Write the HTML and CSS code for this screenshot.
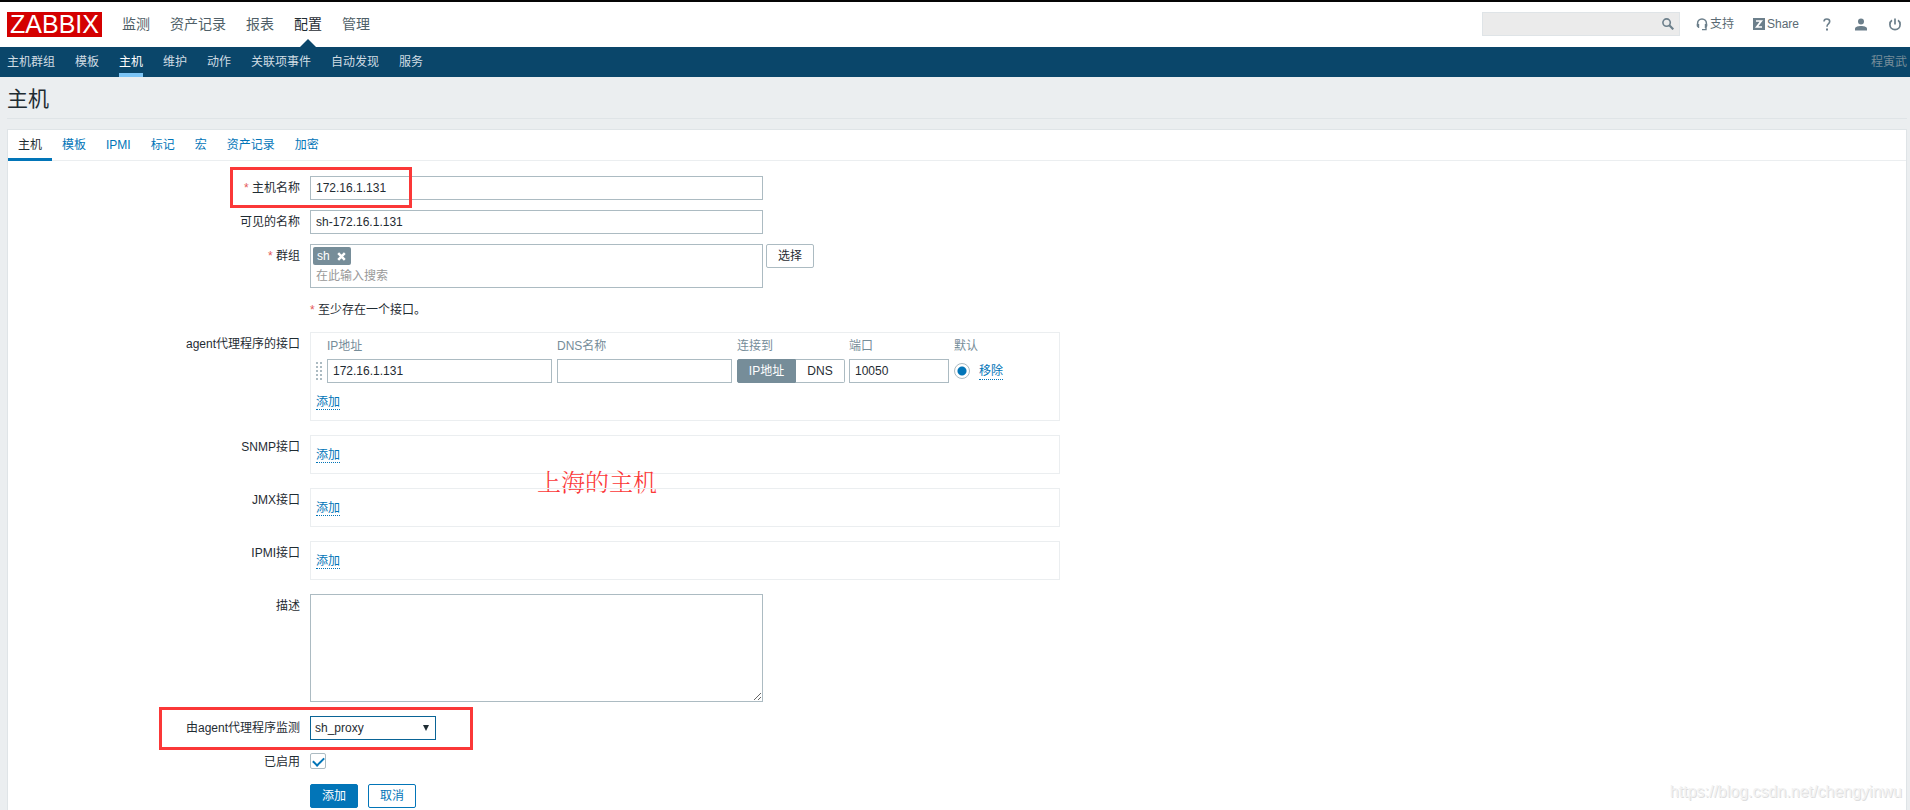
FILE: index.html
```html
<!DOCTYPE html>
<html lang="zh-CN">
<head>
<meta charset="utf-8">
<title>主机</title>
<link rel="stylesheet" href="styles.css">
</head>
<body>
<header class="header">
  <a class="logo" href="#">ZABBIX</a>
  <nav class="main-nav">
    <a href="#">监测</a>
    <a href="#">资产记录</a>
    <a href="#">报表</a>
    <a href="#" class="selected">配置</a>
    <a href="#">管理</a>
  </nav>
  <div class="search">
    <input type="text" aria-label="搜索">
    <button type="button" aria-label="搜索">
      <svg width="12" height="12" viewBox="0 0 12 12"><circle cx="4.600" cy="4.600" r="3.700" fill="none" stroke="currentColor" stroke-width="1.600"/><path d="M7.300 7.300l4 4" stroke="currentColor" stroke-width="2.200"/></svg>
    </button>
  </div>
  <div class="tools">
    <a href="#" class="tool support">
      <svg width="12" height="13" viewBox="0 0 12 13"><path d="M1.600 8V5.300C1.600 3 3.300 1 6 1s4.400 2 4.400 4.300V8" fill="none" stroke="currentColor" stroke-width="1.500"/><path d="M.8 6h2.400v4H2.400L.8 8.600zM8.800 6h2.400v2.600L9.600 10h-.8z" fill="currentColor"/><path d="M10 9v2.600H6" fill="none" stroke="currentColor" stroke-width="1.400"/></svg>
      <span>支持</span>
    </a>
    <a href="#" class="tool share">
      <svg width="12" height="12" viewBox="0 0 12 12"><path d="M0 0h12v12H0z" fill="currentColor"/><path d="M3 3h5.300L3.700 9H9" fill="none" stroke="#fff" stroke-width="1.700"/></svg>
      <span>Share</span>
    </a>
    <a href="#" class="tool help" aria-label="帮助">
      <svg width="8" height="13" viewBox="0 0 8 13"><path d="M1 3.600C1 1.900 2.200 1 3.800 1s2.900.9 2.900 2.500c0 1.200-.8 1.800-1.600 2.600C4.200 6.800 4 7.300 4 8.800" fill="none" stroke="currentColor" stroke-width="1.600"/><path d="M3 10.500h2v2H3z" fill="currentColor"/></svg>
    </a>
    <a href="#" class="tool user" aria-label="用户">
      <svg width="12" height="13" viewBox="0 0 12 13"><circle cx="6" cy="3.400" r="3" fill="currentColor"/><path d="M0 12.500v-1.700C0 8.800 3 8 6 8s6 .8 6 2.800v1.700z" fill="currentColor"/></svg>
    </a>
    <a href="#" class="tool power" aria-label="退出">
      <svg width="12" height="13" viewBox="0 0 12 13"><path d="M3 2.200C1.600 3.100.9 4.600.9 6.400c0 3 2.200 5.200 5.100 5.200s5.100-2.200 5.100-5.200c0-1.800-.7-3.300-2.100-4.200M6 .5v6" fill="none" stroke="currentColor" stroke-width="1.700"/></svg>
    </a>
  </div>
</header>

<nav class="sub-nav">
  <a href="#">主机群组</a>
  <a href="#">模板</a>
  <a href="#" class="selected">主机</a>
  <a href="#">维护</a>
  <a href="#">动作</a>
  <a href="#">关联项事件</a>
  <a href="#">自动发现</a>
  <a href="#">服务</a>
  <span class="account">程寅武</span>
</nav>

<h1 class="title">主机</h1>

<main class="card">
  <nav class="tabs">
    <a href="#" class="selected">主机</a>
    <a href="#">模板</a>
    <a href="#">IPMI</a>
    <a href="#">标记</a>
    <a href="#">宏</a>
    <a href="#">资产记录</a>
    <a href="#">加密</a>
  </nav>

  <form class="form">
    <div class="row">
      <label class="label required" for="host">主机名称</label>
      <div><input class="text wide" id="host" type="text" value="172.16.1.131"></div>
      <span class="mark mark-host"></span>
    </div>
    <div class="row">
      <label class="label" for="visible">可见的名称</label>
      <div><input class="text wide" id="visible" type="text" value="sh-172.16.1.131"></div>
    </div>
    <div class="row">
      <label class="label required" for="groups">群组</label>
      <div class="group-field">
        <div class="multiselect wide">
          <span class="tag">sh
            <button type="button" aria-label="移除 sh"><svg width="9" height="9" viewBox="0 0 9 9"><path d="M1.200 1.200l6.600 6.600M7.800 1.200L1.200 7.800" stroke="currentColor" stroke-width="2.500"/></svg></button>
          </span>
          <input id="groups" type="text" placeholder="在此输入搜索">
        </div>
        <button class="button plain" type="button">选择</button>
      </div>
    </div>
    <div class="row">
      <span></span>
      <p class="note required">至少存在一个接口。</p>
    </div>
    <div class="row spaced">
      <span class="label">agent代理程序的接口</span>
      <div class="box">
        <table class="interfaces">
          <thead>
            <tr><th class="c-drag"></th><th class="c-ip">IP地址</th><th class="c-dns">DNS名称</th><th class="c-connect">连接到</th><th class="c-port">端口</th><th colspan="2">默认</th></tr>
          </thead>
          <tbody>
            <tr>
              <td><span class="drag"></span></td>
              <td><input class="text ip" type="text" value="172.16.1.131" aria-label="IP地址"></td>
              <td><input class="text dns" type="text" aria-label="DNS名称"></td>
              <td><div class="segmented"><button type="button" class="on">IP地址</button><button type="button">DNS</button></div></td>
              <td><input class="text port" type="text" value="10050" aria-label="端口"></td>
              <td class="c-radio"><input class="radio" type="radio" name="main" checked aria-label="默认"></td>
              <td><a class="link" href="#">移除</a></td>
            </tr>
          </tbody>
        </table>
        <a class="link add" href="#">添加</a>
      </div>
    </div>
    <div class="row spaced">
      <span class="label">SNMP接口</span>
      <div class="box"><a class="link add" href="#">添加</a></div>
      <span class="caption">上海的主机</span>
    </div>
    <div class="row spaced">
      <span class="label">JMX接口</span>
      <div class="box"><a class="link add" href="#">添加</a></div>
    </div>
    <div class="row spaced">
      <span class="label">IPMI接口</span>
      <div class="box"><a class="link add" href="#">添加</a></div>
    </div>
    <div class="row spaced">
      <label class="label" for="description">描述</label>
      <div><textarea class="wide" id="description" rows="7"></textarea></div>
    </div>
    <div class="row">
      <label class="label" for="proxy">由agent代理程序监测</label>
      <div class="select"><select id="proxy"><option>sh_proxy</option></select></div>
      <span class="mark mark-proxy"></span>
    </div>
    <div class="row">
      <label class="label" for="enabled">已启用</label>
      <div class="check"><input id="enabled" type="checkbox" checked></div>
    </div>
    <div class="row">
      <span></span>
      <div class="actions">
        <button class="button primary" type="submit">添加</button>
        <button class="button outline" type="button">取消</button>
      </div>
    </div>
  </form>
</main>
<div class="watermark">https://blog.csdn.net/chengyinwu</div>
</body>
</html>
```

FILE: styles.css
```css
* {
  box-sizing: border-box;
}

body {
  position: relative;
  margin: 0;
  background: #ebeef0;
  border-top: 2px solid #050505;
  color: #1f2c33;
  font: 12px/16px "Liberation Sans", "Noto Sans CJK SC", sans-serif;
}

a {
  color: #0275b8;
  text-decoration: none;
}

input,
button,
select,
textarea {
  margin: 0;
  font: inherit;
  color: inherit;
}

svg {
  display: block;
}

/* Header */
.header {
  display: flex;
  align-items: center;
  height: 45px;
  padding: 0 9px 1px 7px;
  background: #fff;
}

.logo {
  width: 95px;
  height: 25px;
  background: #d40000;
  color: #fff;
  font-size: 25px;
  line-height: 25px;
  text-align: center;
}

.main-nav {
  display: flex;
  gap: 20px;
  margin-left: 20px;
  font-size: 14px;
  line-height: 44px;
}

.main-nav a {
  position: relative;
  color: #4f5f68;
}

.main-nav .selected {
  color: #1f2c33;
}

.main-nav .selected::after {
  content: "";
  position: absolute;
  bottom: -1px;
  left: 50%;
  margin-left: -8px;
  border: 8px solid transparent;
  border-top: 0;
  border-bottom-color: #0a466a;
}

.search {
  display: flex;
  align-items: center;
  width: 198px;
  height: 24px;
  margin-left: auto;
  padding-right: 5px;
  border: 1px solid #dfe4e7;
  background: #ebebeb;
}

.search input {
  flex: 1;
  min-width: 0;
  border: 0;
  outline: 0;
  background: transparent;
}

.search button {
  padding: 0;
  border: 0;
  background: none;
  color: #6c7f8b;
}

.tools {
  display: flex;
  align-items: center;
  margin-left: 16px;
}

.tool {
  display: flex;
  align-items: center;
  gap: 2px;
  color: #6c7f8b;
}

.tool span {
  color: #5b6a73;
}

.share {
  margin-left: 19px;
}

.help {
  margin-left: 24px;
}

.user {
  margin-left: 24px;
}

.power {
  margin-left: 22px;
}

/* Second level navigation */
.sub-nav {
  display: flex;
  gap: 20px;
  padding: 0 3px 0 7px;
  background: #0a466a;
  line-height: 30px;
}

.sub-nav a {
  height: 30px;
  color: #d0dce3;
}

.sub-nav .selected {
  border-bottom: 4px solid #7cc4f5;
  color: #fff;
}

.account {
  margin-left: auto;
  color: #768d99;
}

.title {
  margin: 0 3px 10px 7px;
  padding: 10px 0 7px;
  border-bottom: 1px solid #dfe4e7;
  font-size: 21px;
  font-weight: 400;
  line-height: 24px;
}

/* Card with tabs */
.card {
  margin: 0 3px 0 7px;
  padding-bottom: 2px;
  border: 1px solid #dfe4e7;
  border-bottom: 0;
  background: #fff;
}

.tabs {
  display: flex;
  border-bottom: 1px solid #ebeef0;
  line-height: 31px;
}

.tabs a {
  height: 31px;
  margin-bottom: -1px;
  padding: 0 10px;
}

.tabs .selected {
  border-bottom: 3px solid #0275b8;
  color: #1f2c33;
}

/* Form */
.form {
  display: flex;
  flex-direction: column;
  gap: 10px;
  padding-top: 15px;
}

.row {
  position: relative;
  display: grid;
  grid-template-columns: 292px minmax(0, 1fr);
  column-gap: 10px;
  min-height: 24px;
}

.row.spaced {
  margin-bottom: 4px;
}

.label {
  line-height: 24px;
  text-align: right;
}

.required::before {
  content: "* ";
  color: #e45959;
}

.note {
  margin: 0;
  line-height: 24px;
}

.text {
  display: block;
  height: 24px;
  padding: 0 5px;
  border: 1px solid #acbbc2;
  background: #fff;
}

.wide {
  width: 453px;
}

.ip {
  width: 225px;
}

.dns {
  width: 175px;
}

.port {
  width: 100px;
}

.group-field {
  display: flex;
  align-items: flex-start;
  gap: 3px;
}

.multiselect {
  height: 44px;
  padding: 2px;
  border: 1px solid #acbbc2;
}

.multiselect > input {
  display: block;
  width: 100%;
  height: 20px;
  padding: 2px 3px 0;
  border: 0;
  outline: 0;
}

.multiselect > input::placeholder {
  color: #999;
}

.tag {
  display: flex;
  align-items: center;
  gap: 7px;
  width: max-content;
  height: 18px;
  padding: 0 5px 0 4px;
  border-radius: 2px;
  background: #768d99;
  color: #fff;
}

.tag button {
  padding: 0;
  border: 0;
  background: none;
}

.button {
  height: 24px;
  padding: 1px 11px 0;
  border: 1px solid #0275b8;
  border-radius: 2px;
  background: #fff;
  line-height: 21px;
}

.plain {
  border-color: #acbbc2;
}

.primary {
  background: #0275b8;
  color: #fff;
}

.outline {
  color: #0275b8;
}

.box {
  width: 750px;
  padding: 10px 5px;
  border: 1px solid #ebeef0;
}

.link {
  display: block;
  width: max-content;
  border-bottom: 1px dotted #0275b8;
}

.add {
  padding-top: 2px;
  line-height: 14px;
}

/* Interface table */
.interfaces {
  margin: -5px 0 10px;
  border-spacing: 0;
}

.interfaces th {
  padding: 0 0 5px;
  color: #768d99;
  font-weight: 400;
  text-align: left;
}

.interfaces td {
  padding: 0;
}

.c-drag {
  width: 11px;
}

.c-ip {
  width: 230px;
}

.c-dns {
  width: 180px;
}

.c-connect {
  width: 112px;
}

.c-port {
  width: 105px;
}

.c-radio {
  width: 25px;
}

.drag {
  display: block;
  width: 6px;
  height: 18px;
  background: repeating-linear-gradient(transparent 0 2px, #fff 2px 4px), repeating-linear-gradient(90deg, #acbbc2 0 2px, #fff 2px 4px);
}

.segmented {
  display: flex;
  width: 108px;
}

.segmented button {
  flex: 1 0 auto;
  height: 24px;
  padding: 0;
  border: 1px solid #acbbc2;
  border-left: 0;
  border-radius: 0 2px 2px 0;
  background: #fff;
}

.segmented .on {
  flex: 0 0 59px;
  border: 1px solid #768d99;
  border-radius: 2px 0 0 2px;
  background: #768d99;
  color: #fff;
}

.radio {
  appearance: none;
  display: block;
  width: 16px;
  height: 16px;
  border: 1px solid #acbbc2;
  border-radius: 50%;
  background: radial-gradient(circle, #0275b8 4px, #fff 5px);
}

textarea {
  display: block;
  height: 108px;
  padding: 4px 5px;
  border: 1px solid #acbbc2;
  resize: both;
}

.select {
  position: relative;
  width: 126px;
}

.select select {
  appearance: none;
  display: block;
  width: 100%;
  height: 24px;
  padding: 0 20px 0 4px;
  border: 1px solid #0a6496;
  border-radius: 0;
  background: #fff;
}

.select::after {
  content: "";
  position: absolute;
  top: 9px;
  right: 7px;
  border: 3px solid transparent;
  border-top: 6px solid #1f2c33;
  border-bottom: 0;
  pointer-events: none;
}

.check {
  padding-top: 3px;
}

.check input {
  appearance: none;
  display: grid;
  justify-content: center;
  width: 16px;
  height: 16px;
  padding-top: 3px;
  border: 1px solid #acbbc2;
  border-radius: 2px;
}

.check input::before {
  content: "";
  width: 9px;
  height: 5px;
  border: solid #0275b8;
  border-width: 0 0 2px 2px;
  transform: rotate(-45deg);
}

.actions {
  display: flex;
  gap: 10px;
}

/* Annotations over the form */
.mark {
  position: absolute;
  border: 3px solid #fb3838;
  pointer-events: none;
}

.mark-host {
  top: -9px;
  left: 222px;
  width: 182px;
  height: 41px;
}

.mark-proxy {
  top: -9px;
  left: 151px;
  width: 314px;
  height: 43px;
}

.caption {
  position: absolute;
  top: 32px;
  left: 529px;
  color: #fb3838;
  font: 300 24px/32px "Liberation Serif", "Noto Serif CJK SC", "Noto Sans CJK SC", serif;
}

.watermark {
  position: absolute;
  right: 8px;
  bottom: 8px;
  color: #f2f2f2;
  text-shadow: 1px 1px 0 #dedede;
  font-size: 16px;
  line-height: 20px;
}
```
